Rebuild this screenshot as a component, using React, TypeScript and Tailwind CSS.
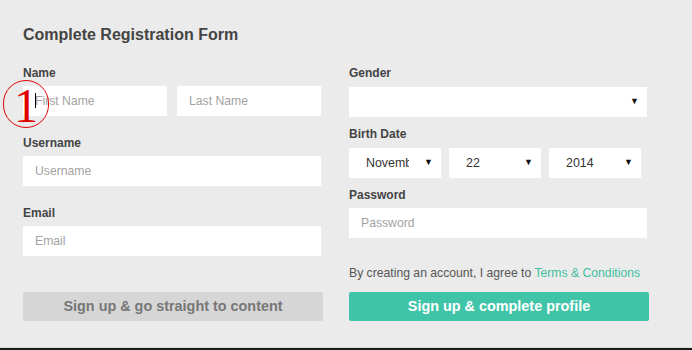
const font = { fontFamily: '"Liberation Sans", Arial, sans-serif' };

function Label({ children, className = '' }: { children: React.ReactNode; className?: string }) {
  return (
    <div className={`h-4 text-[12px] leading-4 font-bold text-[#444] relative top-px ${className}`}>{children}</div>
  );
}

function Field({ placeholder, className = '' }: { placeholder: string; className?: string }) {
  return (
    <input
      placeholder={placeholder}
      className={`h-[30px] bg-white pl-3 text-[12.2px] text-[#444] placeholder:text-[#a3a3a3] outline-none ${className}`}
    />
  );
}

function Select({ value, className = '' }: { value?: string; className?: string }) {
  return (
    <div className={`h-[30px] bg-white flex items-center pl-[17px] pr-[8px] ${className}`}>
      <span className="flex-1 whitespace-nowrap text-[12.4px] text-[#333]">
        <span className="inline-block max-w-[43px] overflow-hidden align-middle">{value}</span>
      </span>
      <span className="text-[9px] text-[#111]">▼</span>
    </div>
  );
}

export default function App() {
  return (
    <div className="w-[692px] h-[350px] bg-[#ebebeb] relative overflow-hidden" style={font}>
      <div className="h-[348px] border-b border-[#dcdcdc] pl-[23px] pt-[25px]">
        <h1 className="text-[16px] leading-5 font-bold text-[#444]">Complete Registration Form</h1>

        <div className="flex gap-[26px] mt-[19px]">
          {/* left column */}
          <div className="w-[300px] flex flex-col">
            <Label>Name</Label>
            <div className="flex gap-[10px] mt-[6px]">
              <Field placeholder="First Name" className="w-[144px]" />
              <Field placeholder="Last Name" className="w-[144px]" />
            </div>
            <Label className="mt-[18px]">Username</Label>
            <Field placeholder="Username" className="w-[298px] mt-[6px]" />
            <Label className="mt-[18px]">Email</Label>
            <Field placeholder="Email" className="w-[298px] mt-[6px]" />
            <button className="mt-[36px] h-[29px] w-[300px] rounded-[2px] bg-[#d6d6d6] text-[14.4px] font-bold text-[#777]">
              Sign up &amp; go straight to content
            </button>
          </div>

          {/* right column */}
          <div className="w-[300px] flex flex-col">
            <Label>Gender</Label>
            <Select className="w-[298px] mt-[7px]" />
            <Label className="mt-[8px]">Birth Date</Label>
            <div className="flex gap-[8px] mt-[7px]">
              <Select value="November" className="w-[92px]" />
              <Select value="22" className="w-[92px]" />
              <Select value="2014" className="w-[92px]" />
            </div>
            <Label className="mt-[8px]">Password</Label>
            <Field placeholder="Password" className="w-[298px] mt-[6px]" />
            <p className="mt-[26px] h-4 text-[12.2px] leading-4 text-[#555] relative top-px">
              By creating an account, I agree to <span className="text-[#3fbf9f]">Terms &amp; Conditions</span>
            </p>
            <button className="mt-[12px] h-[29px] w-[300px] rounded-[2px] bg-[#40c4a7] text-[14.4px] font-bold text-white">
              Sign up &amp; complete profile
            </button>
          </div>
        </div>
      </div>
      <div className="h-[2px] bg-[#1a1a1a]" />

      {/* annotation overlay */}
      <div className="absolute left-[3px] top-[80px] w-[46px] h-[48px] rounded-full border-[1.5px] border-[#e00000] flex items-center justify-center">
        <span
          className="text-[48px] leading-none text-[#e00000] mt-[3px]"
          style={{ fontFamily: '"Liberation Serif", "Times New Roman", serif' }}
        >
          1
        </span>
      </div>
      <div className="absolute left-[35px] top-[93px] w-px h-[15px] bg-black" />
    </div>
  );
}
